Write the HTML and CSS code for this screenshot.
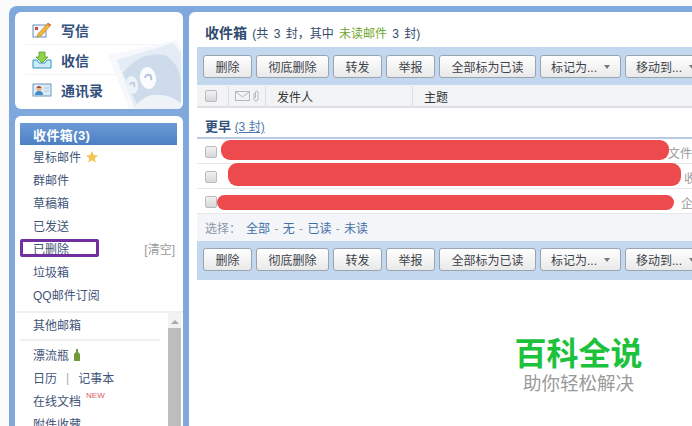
FILE: index.html
```
<!DOCTYPE html>
<html lang="zh">
<head>
<meta charset="utf-8">
<title>QQ邮箱 收件箱</title>
<link rel="stylesheet" href="styles.css">
</head>
<body>
<div class="app">
  <aside class="side">
    <nav class="card quick">
      <svg class="stamp" width="74" height="76" viewBox="0 0 74 76">
        <path d="M-1 22 L68 7 L74 20 L74 76 L20 76 Z" fill="#f6f8fb"/>
        <path d="M8 27 L64 10 L72 20 L72 76 L26 76 Z" fill="#e4ecf5"/>
        <path d="M14 40 Q30 18 56 22 Q72 32 72 52 L72 70 L30 76 Z" fill="#cddbeb"/>
        <path d="M24 76 Q30 66 42 62 Q60 60 72 70 L72 76 Z" fill="#eff3f8"/>
        <ellipse cx="23" cy="52" rx="6" ry="9" fill="#eef3f9" transform="rotate(-10 23 52)"/>
        <ellipse cx="39" cy="45" rx="8" ry="11" fill="#f9fbfd" transform="rotate(-10 39 45)"/>
        <path d="M36 45 Q37 41 41 42 Q43 44 42 47" fill="none" stroke="#b6c6da" stroke-width="2"/>
        <path d="M21 52 Q22 49 25 50 Q26 52 25 54" fill="none" stroke="#c0cee0" stroke-width="2"/>
      </svg>
      <a class="quick-item">
        <svg class="quick-icon" width="20" height="18" viewBox="0 0 20 18">
          <rect x="1" y="4" width="13" height="12" fill="#f4f7fb" stroke="#6d8db5"/>
          <rect x="3" y="6" width="3" height="3" fill="#c0504d"/>
          <path d="M6 13 L16 2 L19 4 L9 15 L5 16 Z" fill="#f3b63f" stroke="#b8812a" stroke-width=".7"/>
          <path d="M16 2 L19 4 L18 5.2 L15 3.2 Z" fill="#e36c4a"/>
        </svg>
        <span>写信</span>
      </a>
      <a class="quick-item">
        <svg class="quick-icon" width="20" height="18" viewBox="0 0 20 18">
          <path d="M1 9 H5 L7 12 H13 L15 9 H19 V17 H1 Z" fill="#cdeaf6" stroke="#2e95c4"/>
          <path d="M7 1 H13 V6 H16 L10 12 L4 6 H7 Z" fill="#8fd04e" stroke="#5aa02c" stroke-width=".8"/>
        </svg>
        <span>收信</span>
      </a>
      <a class="quick-item">
        <svg class="quick-icon" width="20" height="18" viewBox="0 0 20 18">
          <rect x="1" y="3" width="18" height="12" fill="#dcebf7" stroke="#6d97bd"/>
          <path d="M3 14 Q3 10 7 10 Q11 10 11 14 Z" fill="#3f8fc0"/>
          <circle cx="7" cy="7.5" r="2.6" fill="#eab48d"/>
          <path d="M4.4 7 Q7 3 9.6 7 Z" fill="#a8432f"/>
          <path d="M12.5 7 H17 M12.5 10 H17" stroke="#a9c4dc"/>
        </svg>
        <span>通讯录</span>
      </a>
    </nav>
    <nav class="card folders">
      <a class="folder current">收件箱(3)</a>
      <a class="folder">星标邮件
        <svg class="star" width="14" height="14" viewBox="0 0 14 14"><path d="M7 1 L8.8 5 L13 5.4 L9.8 8.2 L10.8 12.6 L7 10.3 L3.2 12.6 L4.2 8.2 L1 5.4 L5.2 5 Z" fill="#f4c455"/></svg>
      </a>
      <a class="folder">群邮件</a>
      <a class="folder">草稿箱</a>
      <a class="folder">已发送</a>
      <a class="folder">已删除<span class="clear">[清空]</span><i class="mark"></i></a>
      <a class="folder">垃圾箱</a>
      <a class="folder">QQ邮件订阅</a>
      <div class="others">
        <div class="other-list">
          <a class="other-title">其他邮箱</a>
          <a class="folder plain">漂流瓶
            <svg class="bottle" width="8" height="14" viewBox="0 0 8 14"><path d="M3 1 H5 V4 L7 6 V13 H1 V6 L3 4 Z" fill="#6f9a3c"/></svg>
          </a>
          <a class="folder plain">日历<span class="pipe">|</span>记事本</a>
          <a class="folder plain">在线文档<sup class="new">NEW</sup></a>
          <a class="folder plain">附件收藏</a>
        </div>
        <div class="scrollbar">
          <span class="arrow"></span>
          <span class="thumb"></span>
        </div>
      </div>
    </nav>
  </aside>
  <main class="main">
    <h1 class="title"><b>收件箱</b> (共 3 封，其中 <em>未读邮件</em> 3 封)</h1>
    <div class="toolbar">
      <button class="btn b49">删除</button>
      <button class="btn b73">彻底删除</button>
      <button class="btn b49">转发</button>
      <button class="btn b49">举报</button>
      <button class="btn b97">全部标为已读</button>
      <button class="btn b80">标记为...<i class="caret"></i></button>
      <button class="btn b80">移动到...<i class="caret"></i></button>
    </div>
    <div class="thead">
      <span class="cell c-check"><i class="check"></i></span>
      <span class="cell c-icons">
        <svg width="26" height="12" viewBox="0 0 26 12">
          <rect x=".5" y="1.5" width="14" height="9" fill="none" stroke="#b4b8bf"/>
          <path d="M1 2 L7.5 7 L14 2" fill="none" stroke="#b4b8bf"/>
          <path d="M19 3 V9 Q19 11 21 11 Q23 11 23 9 V3 Q23 1 21.5 1 Q20.5 1 20.5 3 V8" fill="none" stroke="#b4b8bf"/>
        </svg>
      </span>
      <span class="cell c-from">发件人</span>
      <span class="cell c-subject">主题</span>
    </div>
    <div class="group">更早 <a>(3 封)</a></div>
    <div class="rows">
      <div class="row row-a"><i class="check"></i><span class="snippet">文件夹</span><i class="redact r1"></i></div>
      <div class="row row-b"><i class="check"></i><span class="snippet">收件</span><i class="redact r2"></i></div>
      <div class="row row-c"><i class="check"></i><span class="snippet">企业</span><i class="redact r3"></i></div>
    </div>
    <div class="select">选择：<span class="links"><a>全部</a> - <a>无</a> - <a>已读</a> - <a>未读</a></span></div>
    <div class="toolbar low">
      <button class="btn b49">删除</button>
      <button class="btn b73">彻底删除</button>
      <button class="btn b49">转发</button>
      <button class="btn b49">举报</button>
      <button class="btn b97">全部标为已读</button>
      <button class="btn b80">标记为...<i class="caret"></i></button>
      <button class="btn b80">移动到...<i class="caret"></i></button>
    </div>
    <div class="watermark">
      <strong>百科全说</strong>
      <span>助你轻松解决</span>
    </div>
  </main>
</div>
</body>
</html>
```
FILE: styles.css
```
* { box-sizing: border-box; }
html, body { margin: 0; height: 426px; overflow: hidden; background: #fbfbfb; }
body {
  font-family: "Liberation Sans", "Noto Sans CJK SC", sans-serif;
  font-size: 12px;
  color: #3f5478;
}
a { color: inherit; text-decoration: none; }

.app {
  display: flex;
  height: 420px;
  margin: 6px 0 0 9px;
  padding-top: 6px;
  background: #7fa9dd;
  border-radius: 8px 0 0 0;
}

.side {
  display: flex;
  flex-direction: column;
  gap: 7px;
  width: 174px;
  margin-left: 6px;
  flex: none;
}
.card {
  position: relative;
  width: 168px;
  background: #fff;
  border-radius: 6px;
  overflow: hidden;
}
.card.folders { border-radius: 6px 6px 0 0; }

.quick { height: 97px; padding: 3px 10px 0; flex: none; }
.stamp { position: absolute; right: 0; bottom: 0; z-index: 1; }
.quick-item {
  position: relative;
  display: flex;
  align-items: center;
  height: 30px;
  padding-left: 7px;
  font-size: 14px;
  font-weight: 700;
  color: #33507c;
  border-bottom: 1px solid #f1f3f6;
}
.quick-item:last-of-type { border-bottom: 0; }
.quick-icon { margin-right: 9px; flex: none; }

.folders { flex: 1; padding-top: 7px; }
.folder {
  position: relative;
  display: flex;
  align-items: center;
  height: 23px;
  margin: 0 6px 0 5px;
  padding-left: 13px;
}
.folder.current {
  height: 22px;
  font-size: 13px;
  font-weight: 700;
  letter-spacing: .4px;
  color: #fff;
  background: linear-gradient(#6d9ad6, #4b80c4);
}
.star { margin-left: 4px; }
.bottle { margin-left: 4px; }
.clear { margin-left: auto; margin-right: 2px; color: #9a9a9a; }
.mark {
  position: absolute;
  left: 0;
  top: 2px;
  width: 79px;
  height: 18px;
  border: 3px solid #7030a0;
  border-radius: 2px;
}
.others {
  display: flex;
  margin-top: 5px;
  height: 120px;
  border-top: 2px solid #eeeff1;
}
.other-list { width: 153px; flex: none; }
.other-title {
  display: flex;
  align-items: center;
  height: 28px;
  margin-left: 5px;
  margin-right: 8px;
  padding-left: 13px;
  padding-bottom: 4px;
  border-bottom: 2px solid #eff0f2;
}
.folder.plain { margin-right: 0; }
.other-list .other-title + .folder { margin-top: 2px; }
.pipe { margin: 0 9px; color: #a9a9a9; }
.new {
  align-self: flex-start;
  margin: 2px 0 0 5px;
  font-size: 8px;
  line-height: 10px;
  color: #dd5a5f;
}
.scrollbar {
  display: flex;
  flex-direction: column;
  align-items: center;
  width: 13px;
  background: #f2f2f2;
}
.arrow {
  margin: 7px 0 4px;
  border-left: 4px solid transparent;
  border-right: 4px solid transparent;
  border-bottom: 4px solid #a9a9a9;
}
.thumb { width: 13px; flex: 1; background: #bdbdbd; }

.main {
  position: relative;
  flex: 1;
  min-width: 0;
  padding-left: 8px;
  background: #fff;
  border-radius: 6px 0 0 0;
  overflow: hidden;
}
.title {
  height: 35px;
  margin: 0;
  padding: 12px 0 0 8px;
  font-size: 12px;
  line-height: 18px;
  font-weight: 400;
  word-spacing: 2px;
  color: #35496b;
}
.title b { font-size: 14px; color: #2e4a6e; }
.title em { font-style: normal; color: #6fa52a; }

.toolbar {
  display: flex;
  gap: 4px;
  height: 38px;
  padding: 8px 0 0 6px;
  width: 520px;
  background: #c3d8ef;
  flex: none;
}
.toolbar.low { height: 39px; padding-top: 7px; }
.btn {
  display: flex;
  align-items: center;
  justify-content: center;
  height: 23px;
  padding: 0;
  flex: none;
  font: inherit;
  color: #3d4248;
  background: linear-gradient(#ffffff, #e9e9e9);
  border: 1px solid #9aa4b1;
  border-radius: 3px;
}
.b49 { width: 49px; }
.b73 { width: 73px; }
.b97 { width: 97px; }
.b80 { width: 81px; }
.caret {
  margin-left: 7px;
  border-left: 3px solid transparent;
  border-right: 3px solid transparent;
  border-top: 4px solid #777;
}

.thead {
  display: flex;
  align-items: center;
  height: 23px;
  padding-top: 1px;
  background: #f2f3f5;
  border-bottom: 2px solid #dfe0e3;
  color: #333;
}
.cell {
  display: flex;
  align-items: center;
  height: 20px;
  border-right: 1px solid #dcdde0;
  flex: none;
}
.c-check { width: 32px; padding-left: 8px; }
.c-icons { width: 37px; padding-left: 6px; }
.c-from { width: 147px; padding-left: 11px; }
.c-subject { border-right: 0; padding-left: 11px; }
.check {
  display: block;
  width: 12px;
  height: 12px;
  flex: none;
  background: linear-gradient(#f1f1f1, #d8d8d8);
  border: 1px solid #b9bbbe;
  border-radius: 2px;
}

.group {
  height: 31px;
  padding: 10px 0 0 8px;
  line-height: 17px;
  font-size: 13px;
  font-weight: 700;
  color: #33507c;
  border-bottom: 2px solid #b9cbe2;
}
.group a {
  font-size: 12px;
  font-weight: 400;
  color: #4f79ad;
  text-decoration: underline;
}

.row {
  position: relative;
  display: flex;
  align-items: center;
  height: 25px;
  padding-top: 2px;
  padding-left: 8px;
  border-bottom: 1px solid #e7e8ea;
  color: #9a9a9a;
  white-space: nowrap;
}
.row-a .snippet { margin-left: 451px; }
.row-b .snippet { margin-left: 467px; }
.row-c .snippet { margin-left: 464px; }
.redact {
  position: absolute;
  display: block;
  background: #ec4a4c;
  border-radius: 9px;
}
.r1 { left: 24px; top: 1px; width: 448px; height: 20px; }
.r2 { left: 31px; top: -1px; width: 453px; height: 23px; }
.r3 { left: 20px; top: 6px; width: 457px; height: 15px; }

.select {
  height: 27px;
  padding-left: 8px;
  line-height: 31px;
  word-spacing: 1px;
  background: #f3f5f8;
  color: #8a97a8;
}
.links { margin-left: 5px; color: #999; }
.links a { color: #3f6fa8; }

.watermark {
  position: absolute;
  left: 327px;
  top: 322px;
  display: flex;
  flex-direction: column;
  align-items: center;
  width: 125px;
}
.watermark strong {
  font-family: "Noto Sans CJK SC", sans-serif;
  font-size: 32px;
  line-height: 34px;
  height: 34px;
  white-space: nowrap;
  color: #1cc13c;
}
.watermark span {
  margin-top: 3px;
  font-family: "Noto Sans CJK SC", sans-serif;
  font-size: 18.5px;
  line-height: 22px;
  white-space: nowrap;
  color: #9a9a9a;
}
```
